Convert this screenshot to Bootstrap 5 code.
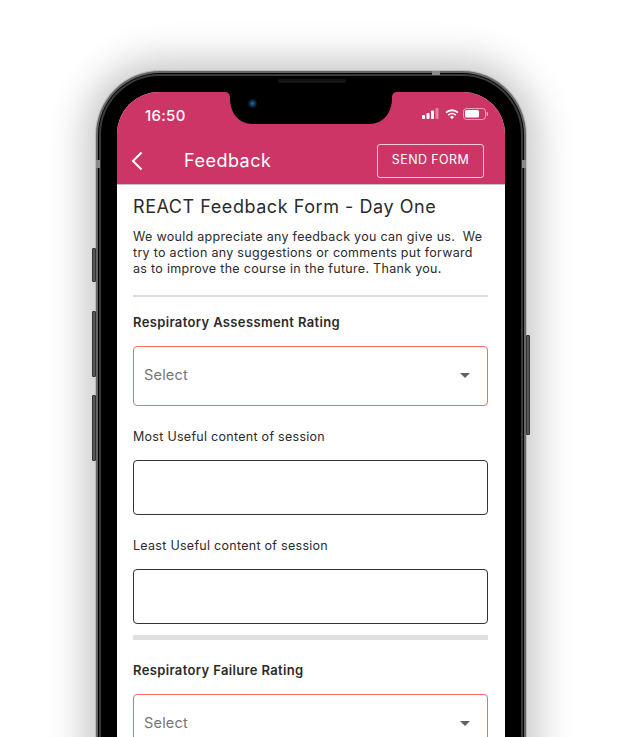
<!DOCTYPE html>
<html lang="en"><head><meta charset="utf-8"><title>Feedback</title>
<link rel="stylesheet" href="https://cdn.jsdelivr.net/npm/bootstrap@5.3.0/dist/css/bootstrap.min.css">
<style>
html,body{height:737px;overflow:hidden;background:#fff}
body{font-family:Inter,"Liberation Sans",sans-serif;padding-top:71px}
.handset{position:relative;width:430px;height:760px;margin-left:96px;padding:21px 20px 0 19px;background:#000;border-radius:64px 64px 0 0;border:2px solid #666;border-bottom:0;box-shadow:0 0 0 1px #bbb,0 0 38px 10px rgba(0,0,0,.24);outline:2px solid #3a3a3a;outline-offset:-5px}
.display{width:388px;height:740px;margin-top:-2px;border-radius:42px 42px 0 0;background:#fff;overflow:hidden}
.appbar{height:93px;background:#cd3567;color:#fff;border-bottom:1px solid #c9c0c4}
.statusline{height:46px;padding:15px 15px 0 28px}
.clock{font-size:15px;font-weight:500;line-height:18px;letter-spacing:.3px}
.titleline{height:45px;padding:0 21px 0 14px}
.pagename{font-size:18px;font-weight:400;margin-left:41px;letter-spacing:.5px;line-height:24px}
.sendbtn{width:107px;height:34px;padding:0;border:1px solid #f3cdd9;border-radius:3px;color:#fff;font-size:12.5px;letter-spacing:.4px;background:transparent}
.sendbtn:hover{color:#fff}
.formbody{padding:10px 17px 0 16px;color:#2b2b2b}
.formtitle{font-size:18px;font-weight:400;line-height:24px;letter-spacing:.55px;margin:0 0 10px}
.intro{font-size:12.5px;line-height:16px;letter-spacing:.3px;margin:0 0 18px;white-space:pre-line}
.thinrule{height:2px;background:#ddd}
.thickrule{height:5px;background:#e0e0e0;margin-top:11px}
.qhead{font-size:13px;font-weight:600;line-height:16px;letter-spacing:.36px;margin:17px 0 16px}
.qhead2{margin-top:22px}
.qplain{font-size:12.5px;line-height:16px;letter-spacing:.28px;margin:23px 0 15px}
.picker{height:60px;border:1px solid #f36a6a;border-radius:4px;padding:0 17px 2px 10px;color:#757575;font-size:14.5px;letter-spacing:.2px}
.caret{width:0;height:0;border:5px solid transparent;border-top-color:#616161;border-bottom:0}
.textbox{height:55px;border:1px solid #333;border-radius:4px;background:#fff;width:100%;display:block}
.notch{position:absolute;left:127px;top:19px}
.speaker{position:absolute;left:180px;top:6px;width:68px;height:4px;border-radius:2px;background:#141414}
.lens{position:absolute;left:150px;top:26px;width:9px;height:9px;border-radius:50%;background:radial-gradient(circle,#1b6fb5 0,#0c2a4a 45%,#05070c 80%)}
.sidekey{position:absolute;width:4px;background:#555;border:1px solid #333;border-radius:1px}
.k1{left:-6px;top:175px;height:34px}.k2{left:-6px;top:238px;height:66px}.k3{left:-6px;top:322px;height:66px}.k4{right:-6px;top:262px;height:100px}
.seam{position:absolute;background:#8a8a8a}
.s1{left:334px;top:-2px;width:8px;height:4px}.s2{left:-2px;top:87px;width:4px;height:8px}.s3{right:-2px;top:87px;width:4px;height:8px}
</style></head>
<body>
<div class="handset">
  <span class="sidekey k1"></span><span class="sidekey k2"></span><span class="sidekey k3"></span><span class="sidekey k4"></span>
  <span class="seam s1"></span><span class="seam s2"></span><span class="seam s3"></span>
  <div class="display">
    <div class="appbar">
      <div class="statusline d-flex justify-content-between align-items-start">
        <span class="clock">16:50</span>
        <svg width="68" height="14" viewBox="0 0 68 14" aria-hidden="true">
          <g fill="#fff"><rect x="0" y="8" width="3" height="4" rx=".7"/><rect x="4.500" y="6" width="3" height="6" rx=".7"/><rect x="9" y="3.500" width="3" height="8.500" rx=".7"/><rect x="13.500" y="1" width="3" height="11" rx=".7" opacity=".4"/>
          <path d="M30 12.200l-2-2.300a3 3 0 0 1 4 0zM25.600 7.400a6.400 6.400 0 0 1 8.800 0l-1.200 1.300a4.700 4.700 0 0 0-6.400 0zM23.400 5a9.600 9.600 0 0 1 13.200 0l-1.200 1.300a7.900 7.900 0 0 0-10.800 0z"/>
          <rect x="43" y="3" width="14" height="7.500" rx="1.500"/></g>
          <rect x="41.500" y="1.500" width="22" height="11" rx="3" fill="none" stroke="#fff" stroke-opacity=".55"/><rect x="64.500" y="5" width="1.500" height="4" rx=".7" fill="#fff" fill-opacity=".55"/>
        </svg>
      </div>
      <div class="titleline d-flex align-items-center">
        <svg width="12" height="20" viewBox="0 0 12 20" aria-hidden="true"><path d="M10.500 1.500L2 10l8.500 8.500" fill="none" stroke="#fff" stroke-width="2"/></svg>
        <span class="pagename flex-grow-1">Feedback</span>
        <button type="button" class="btn sendbtn">SEND FORM</button>
      </div>
    </div>
    <div class="formbody">
      <h1 class="formtitle">REACT Feedback Form - Day One</h1>
      <p class="intro">We would appreciate any feedback you can give us.&nbsp; We
try to action any suggestions or comments put forward
as to improve the course in the future. Thank you.</p>
      <div class="thinrule"></div>
      <div class="qhead">Respiratory Assessment Rating</div>
      <div class="picker d-flex align-items-center justify-content-between"><span>Select</span><span class="caret"></span></div>
      <div class="qplain">Most Useful content of session</div>
      <div class="textbox"></div>
      <div class="qplain">Least Useful content of session</div>
      <div class="textbox"></div>
      <div class="thickrule"></div>
      <div class="qhead qhead2">Respiratory Failure Rating</div>
      <div class="picker d-flex align-items-center justify-content-between"><span>Select</span><span class="caret"></span></div>
    </div>
  </div>
  <svg class="notch" width="172" height="33" viewBox="0 0 172 33" aria-hidden="true"><path d="M0 0C3 0 5 2 5 6C5 20 13 32 28 32H144C159 32 167 20 167 6C167 2 169 0 172 0Z" fill="#000"/></svg>
  <div class="speaker"></div><div class="lens"></div>
</div>
<script src="https://cdn.jsdelivr.net/npm/bootstrap@5.3.0/dist/js/bootstrap.bundle.min.js"></script>
</body></html>
